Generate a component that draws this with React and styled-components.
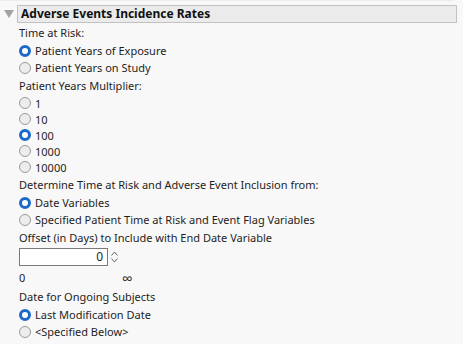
import React from "react";
import styled, { createGlobalStyle } from "styled-components";

const Global = createGlobalStyle`
  body {
    margin: 0;
    background: #f8f8f8;
    font-family: "Noto Sans", "Open Sans", sans-serif;
    font-size: 11px;
    color: #1e1e1e;
  }
`;

const Panel = styled.div`
  width: 463px;
  height: 344px;
  overflow: hidden;
  background: #f8f8f8;
`;

const TopEdge = styled.div`
  width: 454px;
  height: 1px;
  background: #ededed;
`;

const HeaderRow = styled.div`
  display: flex;
  align-items: center;
  margin-top: 4px;
  padding-right: 6px;
`;

const Disclosure = styled.div`
  width: 16px;
  display: flex;
  justify-content: center;
  padding-left: 1px;
`;

const HeaderBox = styled.div`
  flex: 1;
  height: 16px;
  line-height: 16px;
  background: #ebebeb;
  border: 1px solid #c2c2c2;
  padding-left: 3px;
  font-weight: 700;
  font-size: 12px;
  color: #111;
`;

const Body = styled.div`
  padding-left: 19px;
`;

const Label = styled.div`
  height: 18px;
  line-height: 18px;
  margin-top: 1px;
  white-space: nowrap;
`;

const RadioRow = styled.label`
  display: flex;
  align-items: center;
  gap: 4px;
  height: ${(p) => (p.compact ? 16 : 17)}px;
  white-space: nowrap;
`;

const Dot = styled.span`
  box-sizing: border-box;
  width: 12px;
  height: 12px;
  border-radius: 50%;
  flex-shrink: 0;
  border: ${(p) => (p.on ? "3px solid #1b6ac9" : "1px solid #9a9a9a")};
  background: ${(p) => (p.on ? "#fff" : "#ededed")};
`;

const SpinRow = styled.div`
  display: flex;
  align-items: center;
  gap: 3px;
  margin-top: 1px;
`;

const NumBox = styled.div`
  box-sizing: border-box;
  width: 89px;
  height: 18px;
  border: 1px solid #7a7a7a;
  background: #fff;
  text-align: right;
  padding-right: 4px;
  line-height: 16px;
  font-size: 12px;
`;

const Arrows = styled.div`
  display: flex;
  flex-direction: column;
  gap: 2px;
`;

const Range = styled.div`
  display: flex;
  align-items: center;
  height: 19px;
  margin-top: 2px;
`;

const RangeEnd = styled.span`
  width: ${(p) => p.w}px;
  font-size: ${(p) => p.size || 11}px;
`;

const Radio = ({ on, compact, children }) => (
  <RadioRow compact={compact}>
    <Dot on={on} />
    <span>{children}</span>
  </RadioRow>
);

export default function App() {
  return (
    <Panel>
      <Global />
      <TopEdge />
      <HeaderRow>
        <Disclosure>
          <svg width="10" height="8" viewBox="0 0 10 8">
            <path d="M0 0 H10 L5 8 Z" fill="#a3a3a3" />
          </svg>
        </Disclosure>
        <HeaderBox>Adverse Events Incidence Rates</HeaderBox>
      </HeaderRow>
      <Body>
        <Label>Time at Risk:</Label>
        <Radio on>Patient Years of Exposure</Radio>
        <Radio>Patient Years on Study</Radio>

        <Label>Patient Years Multiplier:</Label>
        <Radio compact>1</Radio>
        <Radio compact>10</Radio>
        <Radio compact on>100</Radio>
        <Radio compact>1000</Radio>
        <Radio compact>10000</Radio>

        <Label>Determine Time at Risk and Adverse Event Inclusion from:</Label>
        <Radio on>Date Variables</Radio>
        <Radio>Specified Patient Time at Risk and Event Flag Variables</Radio>

        <Label>Offset (in Days) to Include with End Date Variable</Label>
        <SpinRow>
          <NumBox>0</NumBox>
          <Arrows>
            <svg width="7" height="5" viewBox="0 0 7 5">
              <path d="M0.5 4.5 L3.5 1 L6.5 4.5" fill="none" stroke="#666" strokeWidth="1" />
            </svg>
            <svg width="7" height="5" viewBox="0 0 7 5">
              <path d="M0.5 0.5 L3.5 4 L6.5 0.5" fill="none" stroke="#666" strokeWidth="1" />
            </svg>
          </Arrows>
        </SpinRow>
        <Range>
          <RangeEnd w={103}>0</RangeEnd>
          <RangeEnd w={20} size={15}>∞</RangeEnd>
        </Range>

        <Label>Date for Ongoing Subjects</Label>
        <Radio on>Last Modification Date</Radio>
        <Radio>&lt;Specified Below&gt;</Radio>
      </Body>
    </Panel>
  );
}
